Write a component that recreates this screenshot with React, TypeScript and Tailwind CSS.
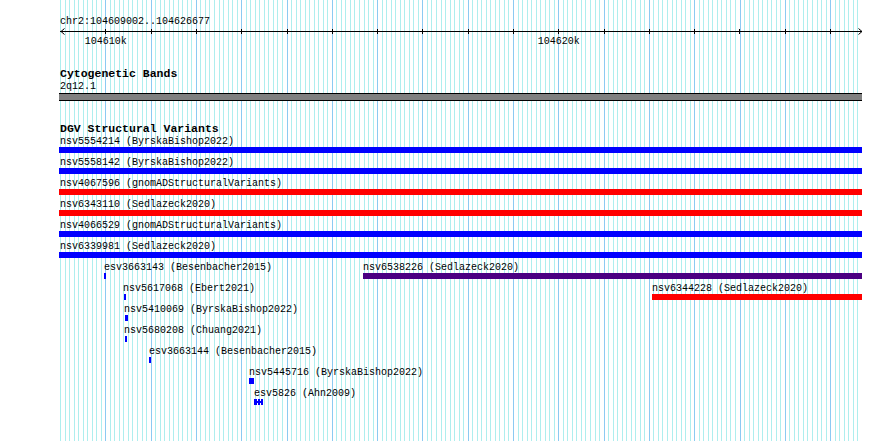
const GRID_LEFT = 60
const MINOR_STEP = 4.53
const MINOR_COUNT = 176
const TICK_START = 105.3
const TICK_STEP = 45.3

const BLUE = '#0000ff'
const RED = '#ff0000'
const INDIGO = '#4b0082'

type Feature = {
  label: string
  x: number
  w: number
  color: string
  labelX?: number
  split?: boolean
}

const full = (label: string, color: string): Feature => ({ label, x: 59, w: 803, color, labelX: 60 })

const rows: Feature[][] = [
  [full('nsv5554214 (ByrskaBishop2022)', BLUE)],
  [full('nsv5558142 (ByrskaBishop2022)', BLUE)],
  [full('nsv4067596 (gnomADStructuralVariants)', RED)],
  [full('nsv6343110 (Sedlazeck2020)', RED)],
  [full('nsv4066529 (gnomADStructuralVariants)', BLUE)],
  [full('nsv6339981 (Sedlazeck2020)', BLUE)],
  [
    { label: 'esv3663143 (Besenbacher2015)', x: 104, w: 2, color: BLUE },
    { label: 'nsv6538226 (Sedlazeck2020)', x: 363, w: 499, color: INDIGO },
  ],
  [
    { label: 'nsv5617068 (Ebert2021)', x: 124, w: 2, color: BLUE, labelX: 123 },
    { label: 'nsv6344228 (Sedlazeck2020)', x: 652, w: 210, color: RED },
  ],
  [{ label: 'nsv5410069 (ByrskaBishop2022)', x: 125, w: 3, color: BLUE, labelX: 124 }],
  [{ label: 'nsv5680208 (Chuang2021)', x: 125, w: 2, color: BLUE, labelX: 124 }],
  [{ label: 'esv3663144 (Besenbacher2015)', x: 149, w: 2, color: BLUE }],
  [{ label: 'nsv5445716 (ByrskaBishop2022)', x: 249, w: 5, color: BLUE }],
  [{ label: 'esv5826 (Ahn2009)', x: 254, w: 9, color: BLUE, split: true }],
]

function GridLines() {
  const lines = Array.from({ length: MINOR_COUNT + 1 }, (_, k) => {
    const x = Math.round(GRID_LEFT + k * MINOR_STEP) + 0.5
    const major = k > 0 && k % 10 === 0
    return <line key={k} x1={x} x2={x} y1={0} y2={441} stroke={major ? '#8ccaf2' : '#aeeeee'} strokeWidth={1} />
  })
  return (
    <svg className="pointer-events-none absolute inset-0" width={890} height={441} shapeRendering="crispEdges">
      {lines}
    </svg>
  )
}

function Ruler() {
  const ticks = Array.from({ length: 17 }, (_, j) => Math.round(TICK_START + j * TICK_STEP))
  return (
    <svg className="block" width={890} height={7} shapeRendering="crispEdges">
      <line x1={60} x2={862} y1={3.5} y2={3.5} stroke="#000" />
      {ticks.map((x) => (
        <rect key={x} x={x} y={1} width={1} height={5} fill="#000" />
      ))}
      <polyline points="64.5,0.5 61,3.5 64.5,6.5" fill="none" stroke="#000" shapeRendering="auto" />
      <polyline points="858.5,0.5 862,3.5 858.5,6.5" fill="none" stroke="#000" shapeRendering="auto" />
    </svg>
  )
}

// esv5826 is drawn as three sub-blocks joined by thin connectors
function SplitBar({ color }: { color: string }) {
  return (
    <div className="flex h-[6px] items-center">
      <div className="h-[6px] w-[3px]" style={{ background: color }} />
      <div className="h-[2px] w-[1px]" style={{ background: color }} />
      <div className="h-[6px] w-[2px]" style={{ background: color }} />
      <div className="h-[2px] w-[1px]" style={{ background: color }} />
      <div className="h-[6px] w-[2px]" style={{ background: color }} />
    </div>
  )
}

function FeatureRow({ features }: { features: Feature[] }) {
  return (
    <div className="relative h-[21px]">
      {features.map((f) => (
        <div key={f.label}>
          <div
            className="absolute top-0 whitespace-nowrap text-[10px] leading-[11px] text-black"
            style={{ left: f.labelX ?? f.x }}
          >
            {f.label}
          </div>
          <div className="absolute top-[11px]" style={{ left: f.x, width: f.w }}>
            {f.split ? <SplitBar color={f.color} /> : <div className="h-[6px] w-full" style={{ background: f.color }} />}
          </div>
        </div>
      ))}
    </div>
  )
}

export default function App() {
  return (
    <div className="relative h-[441px] w-[890px] overflow-hidden bg-white font-['Liberation_Mono','DejaVu_Sans_Mono',monospace] text-black">
      <GridLines />
      <div className="relative">
        <div className="pl-[60px] pt-[16px] text-[10px] leading-[12px]">chr2:104609002..104626677</div>
        <Ruler />
        <div className="relative mt-[1px] h-[12px] text-[10px] leading-[12px]">
          <span className="absolute -translate-x-1/2" style={{ left: 105.8 }}>104610k</span>
          <span className="absolute -translate-x-1/2" style={{ left: 558.8 }}>104620k</span>
        </div>

        <div className="mt-[19px] pl-[60px] text-[11.5px] font-bold leading-[13px]">Cytogenetic Bands</div>
        <div className="mt-[1px] pl-[60px] text-[10px] leading-[12px]">2q12.1</div>
        <div className="ml-[59px] h-[8px] w-[803px] border-y border-black bg-[#808080]" />

        <div className="mt-[21px] pl-[60px] text-[11.5px] font-bold leading-[13px]">DGV Structural Variants</div>
        <div className="mt-[1px]">
          {rows.map((r, i) => (
            <FeatureRow key={i} features={r} />
          ))}
        </div>
      </div>
    </div>
  )
}
